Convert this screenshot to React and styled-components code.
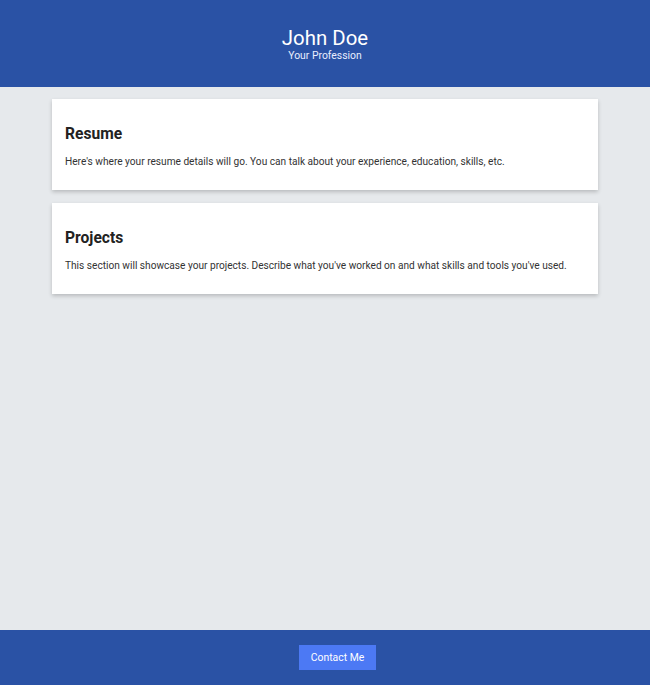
import styled, { createGlobalStyle } from 'styled-components'

const GlobalStyle = createGlobalStyle`
    html, body {
        margin: 0;
        padding: 0;
    }
    body {
        font-family: Roboto, "Liberation Sans", sans-serif;
        background: #e6e9ec;
        color: #333;
    }
`

const Page = styled.div`
    display: flex;
    flex-direction: column;
    min-height: 100vh;
`

const Header = styled.header`
    background: #2a52a5;
    color: #fff;
    text-align: center;
    height: 87px;
    padding-top: 1px;
    box-sizing: border-box;
    display: flex;
    flex-direction: column;
    align-items: center;
    justify-content: center;
`

const Name = styled.h1`
    margin: 0;
    font-size: 20.4px;
    font-weight: 400;
    line-height: 1.2;
`

const Profession = styled.p`
    margin: 0;
    font-size: 10.4px;
    line-height: 1.2;
    color: #e8eeff;
`

const Main = styled.main`
    flex: 1;
    width: 546px;
    margin: 0 auto;
    padding-top: 12px;
    display: flex;
    flex-direction: column;
    gap: 13px;
`

const Card = styled.section`
    background: #fff;
    padding: 13px;
    box-shadow: 0 2px 4px rgba(0, 0, 0, 0.2);
`

const CardTitle = styled.h2`
    margin: 13px 0;
    font-size: 15.6px;
    font-weight: 700;
    line-height: 18px;
    color: #222;
`

const CardText = styled.p`
    margin: 0 0 9px;
    font-size: 10.15px;
    line-height: 12px;
    color: #333;
`

const Footer = styled.footer`
    background: #2a52a5;
    height: 55px;
    padding-left: 25px;
    box-sizing: border-box;
    display: flex;
    align-items: center;
    justify-content: center;
`

const ContactButton = styled.button`
    background: #4c79f4;
    color: #fff;
    border: none;
    font-family: inherit;
    font-size: 10.4px;
    width: 77px;
    height: 25px;
    padding: 0;
    cursor: pointer;
`

const sections = [
    {
        title: 'Resume',
        text: "Here's where your resume details will go. You can talk about your experience, education, skills, etc.",
    },
    {
        title: 'Projects',
        text: "This section will showcase your projects. Describe what you've worked on and what skills and tools you've used.",
    },
]

function App() {
    return (
        <Page>
            <GlobalStyle />
            <Header>
                <Name>John Doe</Name>
                <Profession>Your Profession</Profession>
            </Header>
            <Main>
                {sections.map((s) => (
                    <Card key={s.title}>
                        <CardTitle>{s.title}</CardTitle>
                        <CardText>{s.text}</CardText>
                    </Card>
                ))}
            </Main>
            <Footer>
                <ContactButton>Contact Me</ContactButton>
            </Footer>
        </Page>
    )
}

export default App
